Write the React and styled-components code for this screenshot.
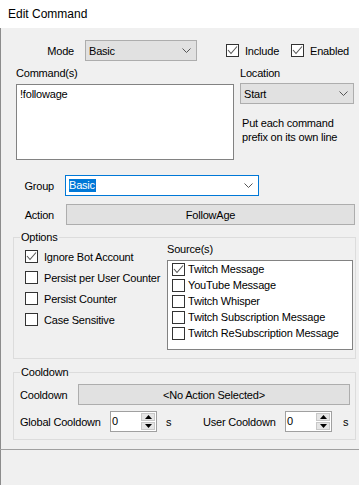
import styled, { createGlobalStyle } from "styled-components";

const GlobalStyle = createGlobalStyle`
  html, body {
    margin: 0;
    padding: 0;
    background: #f0f0f0;
  }
  body {
    font-family: "Liberation Sans", Arial, sans-serif;
    font-size: 11px;
    letter-spacing: -0.2px;
    color: #000;
  }
  * {
    box-sizing: border-box;
  }
`;

const Window = styled.div`
  width: 359px;
  height: 485px;
  display: flex;
  flex-direction: column;
  overflow: hidden;
  background: #f0f0f0;
`;

const TitleBar = styled.div`
  height: 28px;
  flex: none;
  background: #fff;
  padding: 0 0 1px 8px;
  display: flex;
  align-items: center;
  font-size: 12px;
  letter-spacing: 0;
`;

const Body = styled.div`
  flex: 1;
  display: flex;
  flex-direction: column;
  box-shadow: inset 1px 0 0 #8c8c8c;
`;

const Row = styled.div`
  display: flex;
  align-items: center;
  height: 21px;
  flex: none;
  margin-top: ${(p) => p.$top || 0}px;
  padding-left: ${(p) => p.$left || 0}px;
`;

const FieldLabel = styled.span`
  width: ${(p) => p.$w}px;
  flex: none;
  text-align: ${(p) => p.$align || "right"};
  margin-right: ${(p) => p.$gap || 0}px;
  white-space: nowrap;
`;

const Combo = styled.div`
  width: ${(p) => p.$w}px;
  height: 21px;
  flex: none;
  display: flex;
  align-items: center;
  justify-content: space-between;
  padding: 0 5px 0 3px;
  background: ${(p) => (p.$editable ? "#fff" : "#e1e1e1")};
  border: 1px solid ${(p) => (p.$focused ? "#0078d7" : "#adadad")};
`;

const Selected = styled.span`
  background: #0078d7;
  color: #fff;
  line-height: 13px;
  padding: 0 1px 0 0;
`;

const Button = styled.div`
  width: ${(p) => p.$w}px;
  height: 21px;
  flex: none;
  display: flex;
  align-items: center;
  justify-content: center;
  background: #e1e1e1;
  border: 1px solid #adadad;
`;

const CheckItem = styled.label`
  display: flex;
  align-items: center;
  gap: ${(p) => p.$gap ?? 6}px;
  width: ${(p) => (p.$w ? `${p.$w}px` : "auto")};
  margin-left: ${(p) => p.$left || 0}px;
  height: ${(p) => p.$h || 21}px;
  flex: none;
  white-space: nowrap;
`;

const Box = styled.span`
  width: 13px;
  height: 13px;
  flex: none;
  display: flex;
  align-items: center;
  justify-content: center;
  background: #fff;
  border: 1px solid #333;
`;

const Middle = styled.div`
  display: flex;
  padding-left: 16px;
  margin-top: 6px;
  flex: none;
`;

const Column = styled.div`
  display: flex;
  flex-direction: column;
  width: ${(p) => p.$w}px;
  margin-left: ${(p) => p.$left || 0}px;
`;

const SmallLabel = styled.div`
  line-height: 13px;
  height: 13px;
  margin-bottom: ${(p) => p.$after || 0}px;
  margin-top: ${(p) => p.$before || 0}px;
`;

const TextArea = styled.div`
  height: 76px;
  background: #fff;
  border: 1px solid #828282;
  padding: 3px;
  line-height: 13px;
`;

const Hint = styled.div`
  margin-top: 12px;
  padding-left: 2px;
  line-height: 14px;
`;

const Group = styled.fieldset`
  margin: ${(p) => p.$top}px 0 0 13px;
  width: 343px;
  min-width: 0;
  padding: 0;
  border: 1px solid #dcdcdc;
  flex: none;
`;

const Legend = styled.legend`
  margin-left: 6px;
  padding: 0 1px;
  line-height: 13px;
  font-size: 11px;
`;

const OptionsBody = styled.div`
  display: flex;
  justify-content: space-between;
  padding: 2px 2px 8px 11px;
`;

const CheckColumn = styled.div`
  display: flex;
  flex-direction: column;
`;

const SourceColumn = styled.div`
  width: 186px;
  margin-top: -3px;
  display: flex;
  flex-direction: column;
`;

const ListBox = styled.div`
  height: 90px;
  background: #fff;
  border: 1px solid #828282;
  padding: 0 0 0 4px;
`;

const CooldownBody = styled.div`
  display: flex;
  flex-direction: column;
  padding: 5px 0 7px 6px;
`;

const Spinner = styled.div`
  width: 47px;
  height: 21px;
  flex: none;
  display: flex;
  background: #fff;
  border: 1px solid #a0a0a0;
`;

const SpinValue = styled.span`
  flex: 1;
  padding-left: 1px;
  line-height: 19px;
`;

const SpinButtons = styled.div`
  width: 15px;
  display: flex;
  flex-direction: column;
  padding: 1px 1px 1px 0;
  gap: 1px;
`;

const SpinButton = styled.div`
  flex: 1;
  display: flex;
  align-items: center;
  justify-content: center;
  background: #e5e5e5;
  border: 1px solid #c8c8c8;
`;

const Unit = styled.span`
  width: ${(p) => p.$w}px;
  flex: none;
  padding-left: ${(p) => p.$pad}px;
`;

const Separator = styled.div`
  height: 1px;
  flex: none;
  margin-top: 9px;
  background: #a0a0a0;
`;

const Chevron = () => (
  <svg width="9" height="5" viewBox="0 0 9 5">
    <polyline points="0.5,0.5 4.5,4.5 8.5,0.5" fill="none" stroke="#555" strokeWidth="1" />
  </svg>
);

const Tick = () => (
  <svg width="11" height="11" viewBox="0 0 11 11">
    <polyline points="1,5 4,8.5 10,1.5" fill="none" stroke="#555" strokeWidth="1.1" />
  </svg>
);

const Arrow = ({ up }) => (
  <svg width="7" height="4" viewBox="0 0 7 4">
    <polygon points={up ? "0,4 3.5,0 7,4" : "0,0 3.5,4 7,0"} fill="#000" />
  </svg>
);

const Check = ({ checked, children, ...rest }) => (
  <CheckItem {...rest}>
    <Box>{checked && <Tick />}</Box>
    <span>{children}</span>
  </CheckItem>
);

const NumberBox = ({ value }) => (
  <Spinner>
    <SpinValue>{value}</SpinValue>
    <SpinButtons>
      <SpinButton>
        <Arrow up />
      </SpinButton>
      <SpinButton>
        <Arrow />
      </SpinButton>
    </SpinButtons>
  </Spinner>
);

const sources = [
  { name: "Twitch Message", checked: true },
  { name: "YouTube Message" },
  { name: "Twitch Whisper" },
  { name: "Twitch Subscription Message" },
  { name: "Twitch ReSubscription Message" },
];

const options = [
  { name: "Ignore Bot Account", checked: true },
  { name: "Persist per User Counter" },
  { name: "Persist Counter" },
  { name: "Case Sensitive" },
];

const App = () => {
  return (
    <Window>
      <GlobalStyle />
      <TitleBar>Edit Command</TitleBar>
      <Body>
        <Row $top={12}>
          <FieldLabel $w={74} $gap={11}>Mode</FieldLabel>
          <Combo $w={112}>
            <span>Basic</span>
            <Chevron />
          </Combo>
          <Check checked $left={29} $w={65}>Include</Check>
          <Check checked>Enabled</Check>
        </Row>

        <Middle>
          <Column $w={218}>
            <SmallLabel $after={4}>Command(s)</SmallLabel>
            <TextArea>!followage</TextArea>
          </Column>
          <Column $w={114} $left={6}>
            <SmallLabel $after={3}>Location</SmallLabel>
            <Combo $w={114}>
              <span>Start</span>
              <Chevron />
            </Combo>
            <Hint>
              Put each command
              <br />
              prefix on its own line
            </Hint>
          </Column>
        </Middle>

        <Row $top={15}>
          <FieldLabel $w={54} $gap={11}>Group</FieldLabel>
          <Combo $w={194} $editable $focused>
            <Selected>Basic</Selected>
            <Chevron />
          </Combo>
        </Row>

        <Row $top={8}>
          <FieldLabel $w={54} $gap={12}>Action</FieldLabel>
          <Button $w={289}>FollowAge</Button>
        </Row>

        <Group $top={6}>
          <Legend>Options</Legend>
          <OptionsBody>
            <CheckColumn>
              {options.map((o) => (
                <Check key={o.name} checked={o.checked}>
                  {o.name}
                </Check>
              ))}
            </CheckColumn>
            <SourceColumn>
              <SmallLabel $after={4}>Source(s)</SmallLabel>
              <ListBox>
                {sources.map((s) => (
                  <Check key={s.name} checked={s.checked} $gap={3} $h={16}>
                    {s.name}
                  </Check>
                ))}
              </ListBox>
            </SourceColumn>
          </OptionsBody>
        </Group>

        <Group $top={7}>
          <Legend>Cooldown</Legend>
          <CooldownBody>
            <Row>
              <FieldLabel $w={58} $align="left">Cooldown</FieldLabel>
              <Button $w={272}>&lt;No Action Selected&gt;</Button>
            </Row>
            <Row $top={6}>
              <FieldLabel $w={90} $align="left">Global Cooldown</FieldLabel>
              <NumberBox value="0" />
              <Unit $w={46} $pad={9}>s</Unit>
              <FieldLabel $w={82} $align="left">User Cooldown</FieldLabel>
              <NumberBox value="0" />
              <Unit $w={20} $pad={11}>s</Unit>
            </Row>
          </CooldownBody>
        </Group>

        <Separator />
      </Body>
    </Window>
  );
};

export default App;
